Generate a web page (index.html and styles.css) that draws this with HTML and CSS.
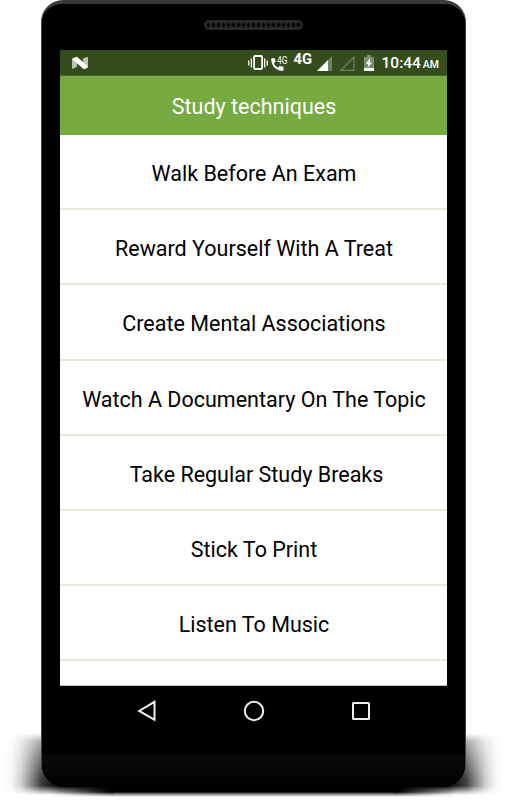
FILE: index.html
```html
<!DOCTYPE html>
<html lang="en">
<head>
  <meta charset="utf-8">
  <title>Study techniques</title>
  <link rel="stylesheet" href="styles.css">
</head>
<body>
  <div class="stage">
    <div class="shadow shadow-left"></div>
    <div class="shadow shadow-right"></div>
    <div class="shadow-bottom"></div>

    <div class="phone">
      <div class="speaker"></div>

      <div class="screen">
        <div class="status-bar">
          <svg class="logo" width="16" height="14" viewBox="0 0 16 14">
            <path d="M0 2.500L5 2V11L0 13zM11 2.500L16 .8V11L11 11z" fill="#b9c3b0"/>
            <path d="M0 3Q2 1 5 .8L16 10.500Q15.500 12.800 11.500 13z" fill="#fff"/>
          </svg>
          <svg class="status-icons" width="130" height="26" viewBox="0 0 130 26">
            <!-- vibrate -->
            <rect x="6.100" y="6" width="8" height="13" rx="1" fill="none" stroke="#fff" stroke-width="1.800"/>
            <path d="M.8 10.500v5M3.400 8.500v9M16.700 8.500v9M19.300 10.500v5" stroke="#fff" stroke-width="1.300"/>
            <!-- call -->
            <path d="M24 8.300h2.800l.7 3.400-1.700 1.800c1 1.900 2.300 3.100 4.100 4.100l1.800-1.700 3.800.8v2.900c0 .8-.4 1.300-1.100 1.300C28 20.900 23.200 15.600 23.200 9.300c0-.6.3-1 .8-1z" fill="#fff"/>
            <text class="tiny" x="29" y="13.500" textLength="10.500" lengthAdjust="spacingAndGlyphs">4G</text>
            <text class="network" x="45.500" y="14" textLength="18.500" lengthAdjust="spacingAndGlyphs">4G</text>
            <!-- signal -->
            <path d="M84 6v15H69z" fill="#71826a"/>
            <path d="M80 10v11H69z" fill="#fff"/>
            <path d="M106 7v13.400H92.800z" fill="none" stroke="#6d7f60" stroke-width="1.300"/>
            <!-- battery -->
            <path d="M116 7h3V5h4v2h3v14h-10z" fill="#7d8d73"/>
            <path d="M116 18h10v3h-10z" fill="#fff"/>
            <path d="M121.800 8.500l-4 5.300h2.500l-.8 4 4.500-5.400h-2.600l1-3.900z" fill="#fff"/>
          </svg>
          <div class="clock">10:44<span class="ampm">AM</span></div>
        </div>

        <div class="header">Study techniques</div>

        <ul class="list">
          <li>Walk Before An Exam</li>
          <li>Reward Yourself With A Treat</li>
          <li>Create Mental Associations</li>
          <li>Watch A Documentary On The Topic</li>
          <li class="indent">Take Regular Study Breaks</li>
          <li>Stick To Print</li>
          <li>Listen To Music</li>
        </ul>
      </div>

      <div class="nav">
        <svg width="22" height="22" viewBox="0 0 22 22"><path d="M18.500 1.800v18L3.200 10.900z"/></svg>
        <svg width="22" height="22" viewBox="0 0 22 22"><circle cx="11" cy="11" r="9.200"/></svg>
        <svg width="22" height="22" viewBox="0 0 22 22"><rect x="3" y="3" width="16" height="16" rx=".5"/></svg>
      </div>

      <div class="chin"></div>
    </div>
  </div>
</body>
</html>
```

FILE: styles.css
```css
* {
  box-sizing: border-box;
}
body {
  margin: 0;
  background: #fff;
  font-family: Roboto, Arial, sans-serif;
}
.stage {
  position: relative;
  width: 507px;
  height: 800px;
  overflow: hidden;
  padding-left: 41px;
}
.phone {
  position: relative;
  display: flex;
  flex-direction: column;
  align-items: center;
  width: 425px;
  height: 787px;
  background: #000;
  border: 1px solid #444;
  border-top: 4px solid #3b3b3b;
  border-bottom: 0;
  border-radius: 22px;
  overflow: hidden;
}
.speaker {
  width: 99px;
  height: 10px;
  margin-top: 16px;
  flex-shrink: 0;
  border: 2px solid #292929;
  border-radius: 5px;
  background: radial-gradient(circle at 50% 50%, #050505 1.5px, #262626 2.2px) 0 0 / 5px 6px;
}
.screen {
  width: 387px;
  height: 636px;
  margin-top: 20px;
  flex-shrink: 0;
  background: #fff;
  border-bottom: 1px solid #bbb;
  overflow: hidden;
}
.status-bar {
  display: flex;
  align-items: center;
  height: 26px;
  padding: 0 8px 0 12px;
  background: #354d1d;
  border-bottom: 1px solid #45632a;
  color: #fff;
}
.status-icons {
  margin-left: 160px;
}
.tiny {
  font-size: 10.5px;
  fill: #fff;
}
.network {
  font-size: 14.5px;
  font-weight: bold;
  fill: #fff;
}
.clock {
  display: flex;
  align-items: baseline;
  gap: 2px;
  margin-left: auto;
  padding-top: 2px;
  font-size: 15.5px;
  font-weight: 500;
  line-height: 26px;
  white-space: nowrap;
}
.ampm {
  font-size: 10.5px;
}
.header {
  height: 59px;
  padding: 1px 0 0 1px;
  line-height: 59px;
  text-align: center;
  font-size: 21.5px;
  color: #fff;
  background: #78aa42;
}
.list {
  margin: 0;
  padding: 0;
  list-style: none;
}
.list li {
  height: 75.2px;
  padding: 1px 0 0 1px;
  line-height: 75px;
  border-bottom: 2px solid #e2ecd6;
  text-align: center;
  font-size: 21.5px;
  color: #000;
  white-space: nowrap;
}
.list .indent {
  padding-left: 6px;
}
.nav {
  display: flex;
  justify-content: space-between;
  width: 236px;
  margin-top: 14px;
}
.nav svg {
  fill: none;
  stroke: #eee;
  stroke-width: 2;
}
.chin {
  width: 100%;
  height: 32px;
  margin-top: auto;
  background: linear-gradient(#090909, #060606 50%, #000);
}
.shadow {
  position: absolute;
  top: 733px;
  width: 110px;
  height: 62px;
  -webkit-mask-image: linear-gradient(transparent, rgba(0,0,0,0.45) 14%, rgba(0,0,0,0.75) 45%, #000 75%, #000 85%, transparent);
  mask-image: linear-gradient(transparent, rgba(0,0,0,0.45) 14%, rgba(0,0,0,0.75) 45%, #000 75%, #000 85%, transparent);
}
.shadow-left {
  left: 4px;
  background: linear-gradient(to right, transparent, rgba(0,0,0,0.04) 8px, rgba(0,0,0,0.18) 17px, rgba(0,0,0,0.45) 27px, rgba(0,0,0,0.75) 37px, #000 56px);
}
.shadow-right {
  right: 4px;
  background: linear-gradient(to left, transparent, rgba(0,0,0,0.04) 8px, rgba(0,0,0,0.18) 17px, rgba(0,0,0,0.45) 27px, rgba(0,0,0,0.75) 37px, #000 56px);
}
.shadow-bottom {
  position: absolute;
  left: 50px;
  top: 780px;
  width: 407px;
  height: 17px;
  background: linear-gradient(#000 70%, rgba(0,0,0,0.5) 82%, transparent);
  -webkit-mask-image: linear-gradient(to right, transparent, #000 60px, #000 347px, transparent);
  mask-image: linear-gradient(to right, transparent, #000 60px, #000 347px, transparent);
}
```
